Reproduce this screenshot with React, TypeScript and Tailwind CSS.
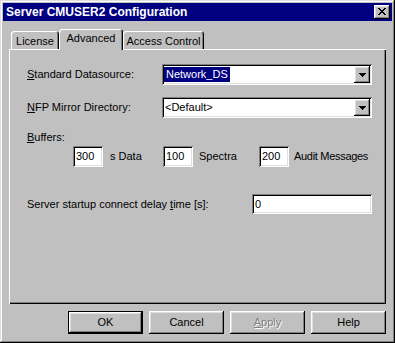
import React from "react";

const raised =
  "shadow-[inset_-1px_-1px_#000,inset_1px_1px_#fff,inset_-2px_-2px_#808080,inset_2px_2px_#dfdfdf]";
const sunken =
  "shadow-[inset_1px_1px_#808080,inset_-1px_-1px_#fff,inset_2px_2px_#000,inset_-2px_-2px_#dfdfdf]";

function CloseGlyph() {
  const rows = ["11000011", "01100110", "00111100", "00011000", "00111100", "01100110", "11000011"];
  const rects: React.ReactNode[] = [];
  rows.forEach((r, y) =>
    r.split("").forEach((c, x) => {
      if (c === "1") rects.push(<rect key={`${x}-${y}`} x={x} y={y} width={1} height={1} fill="#000" />);
    })
  );
  return (
    <svg width="8" height="7" viewBox="0 0 8 7" shapeRendering="crispEdges">
      {rects}
    </svg>
  );
}

function DownArrow() {
  return (
    <svg width="7" height="4" viewBox="0 0 7 4" shapeRendering="crispEdges">
      <rect x="0" y="0" width="7" height="1" fill="#000" />
      <rect x="1" y="1" width="5" height="1" fill="#000" />
      <rect x="2" y="2" width="3" height="1" fill="#000" />
      <rect x="3" y="3" width="1" height="1" fill="#000" />
    </svg>
  );
}

function Combo({ children }: { children: React.ReactNode }) {
  return (
    <div className={`w-[210px] h-[21px] bg-white ${sunken} flex items-center p-[2px]`}>
      <div className="flex-1 flex items-center h-full overflow-hidden">{children}</div>
      <div className={`w-[16px] h-[17px] bg-[#c0c0c0] ${raised} flex items-center justify-center`}>
        <DownArrow />
      </div>
    </div>
  );
}

function Edit({ value, w, h }: { value: string; w: string; h: string }) {
  return (
    <div className={`${w} ${h} bg-white ${sunken} flex items-center px-[3px] text-black`}>{value}</div>
  );
}

function Btn({ label, def, disabled }: { label: React.ReactNode; def?: boolean; disabled?: boolean }) {
  if (def) {
    return (
      <div className="w-[75px] h-[23px] border border-black">
        <div className={`w-full h-full ${raised} flex items-center justify-center`}>{label}</div>
      </div>
    );
  }
  return (
    <div
      className={`w-[75px] h-[23px] ${raised} flex items-center justify-center ${
        disabled ? "text-[#808080] [text-shadow:1px_1px_0_#fff]" : ""
      }`}
    >
      {label}
    </div>
  );
}

const tab = "shadow-[inset_1px_1px_#fff,inset_-1px_0_#000,inset_-2px_0_#808080] rounded-t-[3px] bg-[#c0c0c0]";

export default function App() {
  return (
    <div
      className={`w-[395px] h-[343px] bg-[#c0c0c0] p-[3px] flex flex-col font-['Liberation_Sans',Arial,sans-serif] text-[11px] leading-[13px] text-black shadow-[inset_-1px_-1px_#000,inset_1px_1px_#dfdfdf,inset_-2px_-2px_#808080,inset_2px_2px_#fff]`}
    >
      {/* Title bar */}
      <div className="h-[18px] bg-[#000080] flex items-center justify-between pl-[3px] pr-[2px]">
        <span className="text-white font-bold text-[12px] leading-[14px]">Server CMUSER2 Configuration</span>
        <div className={`w-[16px] h-[14px] bg-[#c0c0c0] ${raised} flex items-center justify-center pb-[1px]`}>
          <CloseGlyph />
        </div>
      </div>

      <div className="flex-1 flex flex-col px-[6px] pb-[6px]">
        {/* Tabs */}
        <div className="mt-[8px] h-[20px] flex items-end pl-[2px]">
          <div className={`w-[48px] h-[18px] ${tab} flex items-center justify-center pt-[2px]`}>License</div>
          <div
            className={`relative z-10 w-[64px] h-[21px] -mb-[1px] ${tab} flex items-start justify-center pt-[3px]`}
          >
            Advanced
          </div>
          <div className={`w-[81px] h-[18px] ${tab} flex items-center justify-center pt-[2px]`}>
            Access Control
          </div>
        </div>

        {/* Panel */}
        <div className="h-[255px] shadow-[inset_1px_1px_#fff,inset_-1px_-1px_#000,inset_-2px_-2px_#808080] flex flex-col pl-[18px] pt-[15px]">
          <div className="flex items-center h-[21px]">
            <span className="w-[135px]">
              <u>S</u>tandard Datasource:
            </span>
            <Combo>
              <span className="h-[15px] px-[2px] bg-[#000080] text-white flex items-center">Network_DS</span>
            </Combo>
          </div>
          <div className="flex items-center h-[21px] mt-[12px]">
            <span className="w-[135px]">
              <u>N</u>FP Mirror Directory:
            </span>
            <Combo>
              <span className="pl-[1px]">&lt;Default&gt;</span>
            </Combo>
          </div>
          <div className="mt-[13px] h-[13px]">
            <u>B</u>uffers:
          </div>
          <div className="mt-[2px] flex items-center h-[21px] pl-[46px]">
            <Edit value="300" w="w-[30px]" h="h-[21px]" />
            <span className="ml-[7px] w-[53px]">s Data</span>
            <Edit value="100" w="w-[30px]" h="h-[21px]" />
            <span className="ml-[6px] w-[60px]">Spectra</span>
            <Edit value="200" w="w-[30px]" h="h-[21px]" />
            <span className="ml-[5px] tracking-[-0.3px]">Audit Messages</span>
          </div>
          <div className="mt-[27px] flex items-center h-[20px]">
            <span className="w-[225px]">
              Server startup connect delay <u>t</u>ime [s]:
            </span>
            <Edit value="0" w="w-[120px]" h="h-[20px]" />
          </div>
        </div>

        {/* Buttons */}
        <div className="mt-[7px] flex justify-end gap-[6px]">
          <Btn label="OK" def />
          <Btn label="Cancel" />
          <Btn
            label={
              <span>
                <u>A</u>pply
              </span>
            }
            disabled
          />
          <Btn label="Help" />
        </div>
      </div>
    </div>
  );
}
